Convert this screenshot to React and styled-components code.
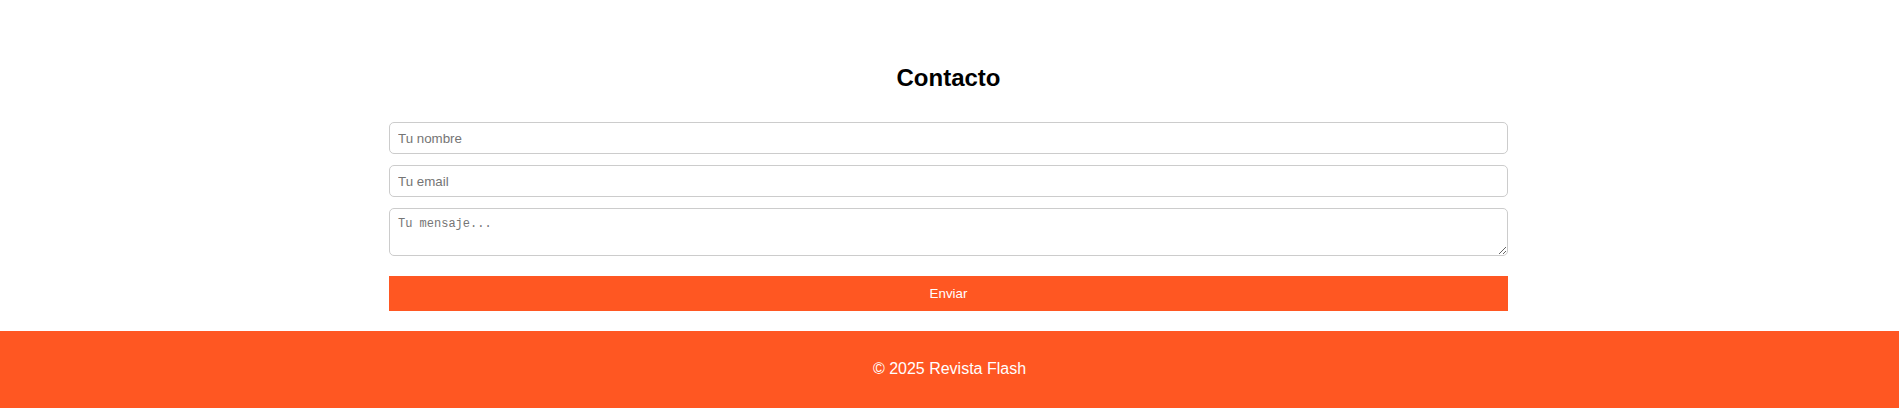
import React from "react";
import styled, { createGlobalStyle } from "styled-components";

const GlobalStyle = createGlobalStyle`
  html, body {
    margin: 0;
    padding: 0;
    background: #ffffff;
    font-family: "Liberation Sans", Arial, sans-serif;
  }
  * { box-sizing: border-box; }
`;

const ORANGE = "#ff5722";

const Section = styled.section`
  width: 1119px;
  margin: 0 0 0 calc((100% - 1121px) / 2);
  padding: 64px 0 20px;
  display: flex;
  flex-direction: column;
`;

const Title = styled.h2`
  margin: 0 0 30px;
  font-size: 24px;
  line-height: 28px;
  font-weight: 700;
  text-align: center;
  color: #000;
`;

const Form = styled.form`
  display: flex;
  flex-direction: column;
`;

const Field = styled.input`
  display: block;
  width: 100%;
  height: 32px;
  margin: 0 0 11px;
  padding: 0 8px;
  border: 1px solid #cccccc;
  border-radius: 5px;
  font-family: "Liberation Sans", Arial, sans-serif;
  font-size: 13.33px;
  color: #222;
  background: #fff;
  outline: none;
  &::placeholder { color: #757575; }
`;

const Message = styled.textarea`
  display: block;
  width: 100%;
  height: 48px;
  margin: 0 0 20px;
  padding: 8px 8px;
  border: 1px solid #cccccc;
  border-radius: 5px;
  font-family: "Liberation Mono", "DejaVu Sans Mono", monospace;
  font-size: 12px;
  line-height: 15px;
  color: #222;
  background: #fff;
  outline: none;
  &::placeholder { color: #757575; }
`;

const Submit = styled.button`
  display: block;
  width: 100%;
  height: 35px;
  border: none;
  background: ${ORANGE};
  color: #fff;
  font-family: "Liberation Sans", Arial, sans-serif;
  font-size: 13.33px;
  cursor: pointer;
`;

const Footer = styled.footer`
  background: ${ORANGE};
  color: #fff;
  text-align: center;
  padding: 29px 0 30px;
  font-size: 16px;
  line-height: 18px;
`;

export default function App() {
  return (
    <>
      <GlobalStyle />
      <Section>
        <Title>Contacto</Title>
        <Form onSubmit={(e) => e.preventDefault()}>
          <Field type="text" placeholder="Tu nombre" />
          <Field type="email" placeholder="Tu email" />
          <Message placeholder="Tu mensaje..." />
          <Submit type="submit">Enviar</Submit>
        </Form>
      </Section>
      <Footer>© 2025 Revista Flash</Footer>
    </>
  );
}
